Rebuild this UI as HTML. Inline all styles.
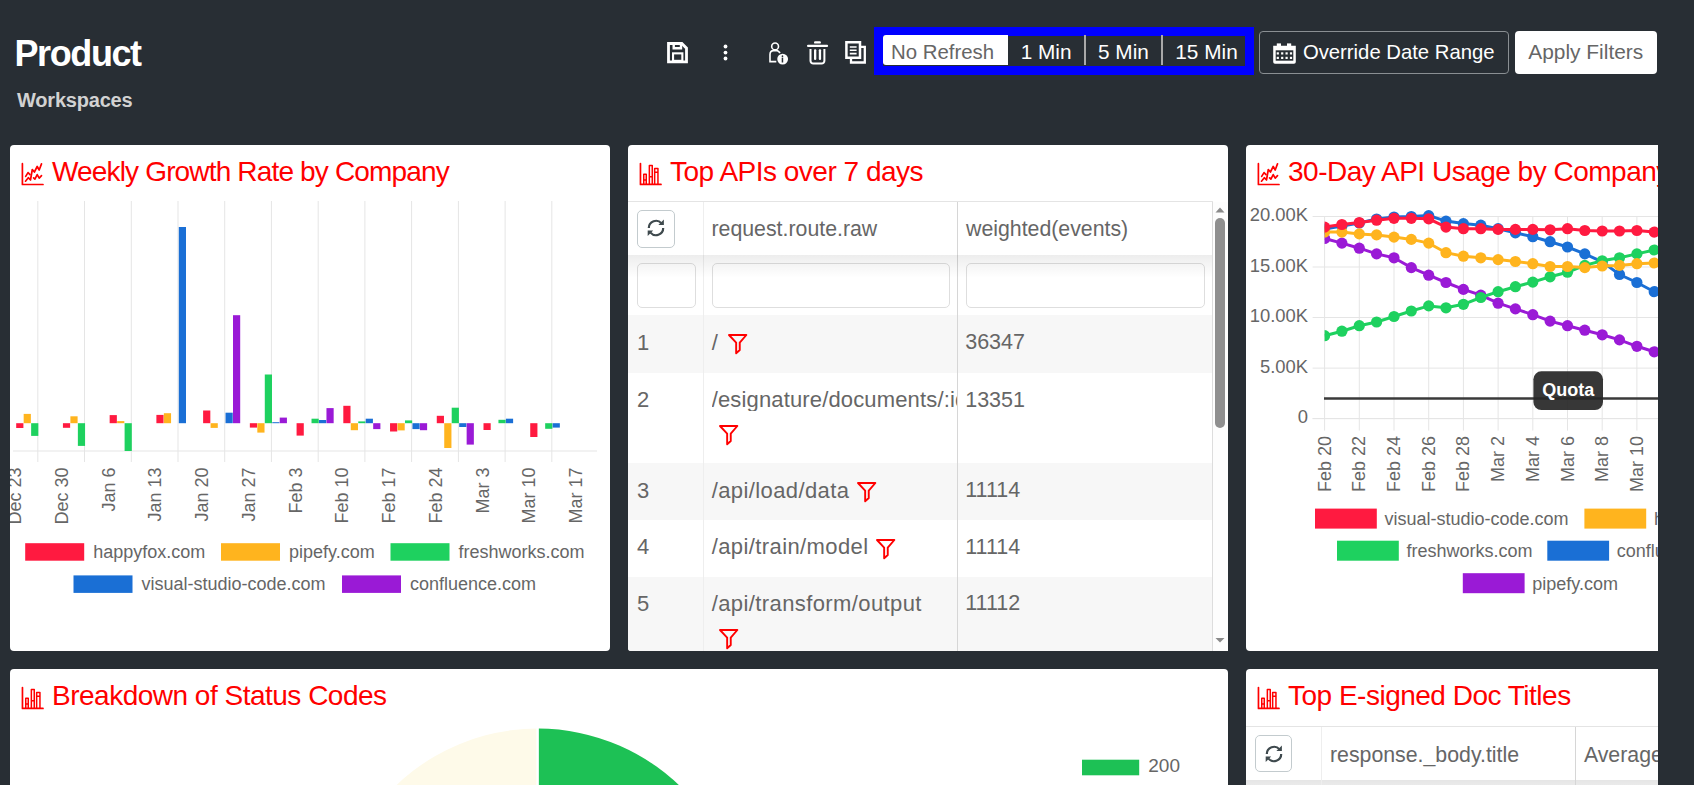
<!DOCTYPE html><html><head><meta charset="utf-8"><style>
html,body{margin:0;padding:0;width:1694px;height:785px;overflow:hidden;background:#282e34;font-family:"Liberation Sans", sans-serif;}
.a{position:absolute}
.card{position:absolute;background:#fff;border-radius:4px;overflow:hidden}
.ttl{position:absolute;color:#ff0000;font-size:28px;line-height:32px;white-space:nowrap;letter-spacing:-0.5px}
svg text{font-family:"Liberation Sans", sans-serif}
</style></head><body><div class="a" style="left:14.5px;top:31.7px;color:#fff;font-size:36px;font-weight:700;letter-spacing:-1.4px;line-height:44px">Product</div><div class="a" style="left:17px;top:88.2px;color:#d2d2d2;font-size:20px;font-weight:700;letter-spacing:-0.2px;line-height:24px">Workspaces</div><svg class="a" style="left:664px;top:39px" width="28" height="28" viewBox="664 39 28 28"><path d="M668.5 43.5H681.8L686.5 48.2V61.8H668.5Z" fill="none" stroke="#fff" stroke-width="2.8" stroke-linejoin="miter"/><path d="M673.7 44V48.3H681V44" fill="none" stroke="#fff" stroke-width="2.4"/><rect x="673.05" y="53.35" width="9.3" height="7.5" fill="none" stroke="#fff" stroke-width="2.1"/></svg><svg class="a" style="left:720px;top:42px" width="12" height="22" viewBox="720 42 12 22"><circle cx="725.5" cy="46.5" r="1.9" fill="#fff"/><circle cx="725.5" cy="52.6" r="1.9" fill="#fff"/><circle cx="725.5" cy="58.5" r="1.9" fill="#fff"/></svg><svg class="a" style="left:765px;top:39px" width="28" height="28" viewBox="765 39 28 28"><circle cx="775.1" cy="46.4" r="3.4" fill="none" stroke="#fff" stroke-width="1.6"/><path d="M776.3 61.6H770V54.5Q770 50.6 773.6 50.6H777.4L780.2 52.9" fill="none" stroke="#fff" stroke-width="1.6"/><circle cx="782.65" cy="59.06" r="5.4" fill="#fff"/><rect x="781.7" y="57.6" width="1.5" height="4.9" fill="#282e34"/><circle cx="782.45" cy="56.2" r="0.85" fill="#282e34"/></svg><svg class="a" style="left:804px;top:38px" width="28" height="30" viewBox="804 38 28 30"><rect x="814" y="41.2" width="6.9" height="2.4" rx="1.2" fill="#fff"/><rect x="807" y="44.7" width="21.1" height="2.3" rx="1.1" fill="#fff"/><path d="M810.5 49V60.8A2.8 2.8 0 0 0 813.3 63.6H821.6A2.8 2.8 0 0 0 824.4 60.8V49" fill="none" stroke="#fff" stroke-width="2"/><rect x="814" y="49.2" width="2.3" height="10.8" rx="1.1" fill="#fff"/><rect x="818.8" y="49.2" width="2.3" height="10.8" rx="1.1" fill="#fff"/></svg><svg class="a" style="left:842px;top:38px" width="28" height="30" viewBox="842 38 28 30"><path d="M846.4 42.2H860V57.8H846.4Z" fill="none" stroke="#fff" stroke-width="2.5"/><path d="M860 46.9H864.8V62.5H851V57.8" fill="none" stroke="#fff" stroke-width="2.3"/><path d="M849.8 47H856.6M849.8 50.3H856.6M849.8 53.6H856.6" stroke="#fff" stroke-width="1.6"/></svg><div class="a" style="left:873.5px;top:26.5px;width:380px;height:48px;box-sizing:border-box;border:9px solid #0000ff;background:transparent"></div><div class="a" style="left:882.5px;top:35.3px;width:125.4px;height:30px;background:#fff;border-radius:3px 0 0 3px"></div><div class="a" style="left:891px;top:42.3px;font-size:20.4px;line-height:20.4px;color:#666;white-space:nowrap;">No Refresh</div><div class="a" style="left:1020.7px;top:42.0px;font-size:20.8px;line-height:20.8px;color:#fff;white-space:nowrap;">1 Min</div><div class="a" style="left:1098px;top:42.0px;font-size:20.8px;line-height:20.8px;color:#fff;white-space:nowrap;">5 Min</div><div class="a" style="left:1175.3px;top:42.0px;font-size:20.8px;line-height:20.8px;color:#fff;white-space:nowrap;">15 Min</div><div class="a" style="left:1084.2px;top:35.3px;width:1.8px;height:30px;background:#a9a9a9"></div><div class="a" style="left:1161.2px;top:35.3px;width:1.8px;height:30px;background:#a9a9a9"></div><div class="a" style="left:1258.5px;top:30.8px;width:250.3px;height:43.6px;box-sizing:border-box;border:1px solid #8a8f93;border-radius:4px"></div><svg class="a" style="left:1270px;top:40px" width="30" height="28" viewBox="1270 40 30 28"><path d="M1273.2 45.7H1295.8V62A1.8 1.8 0 0 1 1294 63.8H1275A1.8 1.8 0 0 1 1273.2 62Z" fill="#fff"/><rect x="1276.8" y="43.4" width="4.2" height="3" fill="#fff"/><rect x="1287" y="43.4" width="4.2" height="3" fill="#fff"/><rect x="1275.7" y="50.3" width="17.6" height="10.4" fill="#282e34"/><rect x="1276.7" y="52.3" width="2.2" height="2.2" fill="#fff"/><rect x="1276.7" y="56.8" width="2.2" height="2.2" fill="#fff"/><rect x="1281.1000000000001" y="52.3" width="2.2" height="2.2" fill="#fff"/><rect x="1281.1000000000001" y="56.8" width="2.2" height="2.2" fill="#fff"/><rect x="1285.5" y="52.3" width="2.2" height="2.2" fill="#fff"/><rect x="1285.5" y="56.8" width="2.2" height="2.2" fill="#fff"/><rect x="1289.9" y="52.3" width="2.2" height="2.2" fill="#fff"/><rect x="1289.9" y="56.8" width="2.2" height="2.2" fill="#fff"/></svg><div class="a" style="left:1302.9px;top:42.4px;font-size:20.3px;line-height:20.3px;color:#fff;white-space:nowrap;">Override Date Range</div><div class="a" style="left:1515px;top:30.8px;width:142.4px;height:43.6px;background:#fff;border-radius:4px"></div><div class="a" style="left:1528.3px;top:41.9px;font-size:20.9px;line-height:20.9px;color:#666;white-space:nowrap;">Apply Filters</div><div class="card" style="left:10px;top:145px;width:600px;height:506px"><svg width="45" height="45" viewBox="0 0 45 45" style="position:absolute;left:0;top:0.4px" fill="none" stroke="red" stroke-width="1.7" stroke-linecap="round" stroke-linejoin="round"><path d="M12.4 18.7V39.5H33"/><path d="M15.7 31.4L18 27.6L20 29.6"/><path d="M15.5 36.2L18.3 32.7L20.5 35L22.3 24.5L24.4 27L27.2 21.5L29.2 25L31.5 18.9"/><path d="M23.6 32.9L24.9 34.2L27.2 29.6L29.2 33.2L31.5 30.6"/></svg><div class="ttl" style="left:42px;top:11.3px;letter-spacing:-0.84px">Weekly Growth Rate by Company</div><svg width="600" height="506" viewBox="10 145 600 506" style="position:absolute;left:0;top:0"><line x1="37.8" y1="201" x2="37.8" y2="462" stroke="#e5e5e5" stroke-width="1"/><line x1="84.5" y1="201" x2="84.5" y2="462" stroke="#e5e5e5" stroke-width="1"/><line x1="131.3" y1="201" x2="131.3" y2="462" stroke="#e5e5e5" stroke-width="1"/><line x1="178.0" y1="201" x2="178.0" y2="462" stroke="#e5e5e5" stroke-width="1"/><line x1="224.7" y1="201" x2="224.7" y2="462" stroke="#e5e5e5" stroke-width="1"/><line x1="271.4" y1="201" x2="271.4" y2="462" stroke="#e5e5e5" stroke-width="1"/><line x1="318.2" y1="201" x2="318.2" y2="462" stroke="#e5e5e5" stroke-width="1"/><line x1="364.9" y1="201" x2="364.9" y2="462" stroke="#e5e5e5" stroke-width="1"/><line x1="411.6" y1="201" x2="411.6" y2="462" stroke="#e5e5e5" stroke-width="1"/><line x1="458.4" y1="201" x2="458.4" y2="462" stroke="#e5e5e5" stroke-width="1"/><line x1="505.1" y1="201" x2="505.1" y2="462" stroke="#e5e5e5" stroke-width="1"/><line x1="551.8" y1="201" x2="551.8" y2="462" stroke="#e5e5e5" stroke-width="1"/><line x1="13" y1="451" x2="597" y2="451" stroke="#e5e5e5" stroke-width="1.2"/><rect x="16.20" y="423.20" width="7.2" height="4.80" fill="#ff1a40"/><rect x="23.67" y="413.90" width="7.2" height="9.30" fill="#ffb41e"/><rect x="31.14" y="423.20" width="7.2" height="12.70" fill="#1ed15f"/><rect x="62.93" y="423.20" width="7.2" height="4.60" fill="#ff1a40"/><rect x="70.40" y="416.30" width="7.2" height="6.90" fill="#ffb41e"/><rect x="77.87" y="423.20" width="7.2" height="22.70" fill="#1ed15f"/><rect x="109.66" y="415.10" width="7.2" height="8.10" fill="#ff1a40"/><rect x="117.13" y="421.10" width="7.2" height="2.10" fill="#ffb41e"/><rect x="124.60" y="423.20" width="7.2" height="27.80" fill="#1ed15f"/><rect x="156.39" y="414.90" width="7.2" height="8.30" fill="#ff1a40"/><rect x="163.86" y="413.20" width="7.2" height="10.00" fill="#ffb41e"/><rect x="178.80" y="227.00" width="7.2" height="196.20" fill="#1a6fd5"/><rect x="203.12" y="410.50" width="7.2" height="12.70" fill="#ff1a40"/><rect x="210.59" y="423.20" width="7.2" height="4.70" fill="#ffb41e"/><rect x="225.53" y="412.70" width="7.2" height="10.50" fill="#1a6fd5"/><rect x="233.00" y="315.20" width="7.2" height="108.00" fill="#9a1ad6"/><rect x="249.85" y="423.20" width="7.2" height="4.40" fill="#ff1a40"/><rect x="257.32" y="423.20" width="7.2" height="9.40" fill="#ffb41e"/><rect x="264.79" y="374.50" width="7.2" height="48.70" fill="#1ed15f"/><rect x="272.26" y="422.20" width="7.2" height="1.00" fill="#1a6fd5"/><rect x="279.73" y="417.60" width="7.2" height="5.60" fill="#9a1ad6"/><rect x="296.58" y="423.20" width="7.2" height="12.40" fill="#ff1a40"/><rect x="311.52" y="418.70" width="7.2" height="4.50" fill="#1ed15f"/><rect x="318.99" y="420.00" width="7.2" height="3.20" fill="#1a6fd5"/><rect x="326.46" y="408.10" width="7.2" height="15.10" fill="#9a1ad6"/><rect x="343.31" y="405.80" width="7.2" height="17.40" fill="#ff1a40"/><rect x="350.78" y="423.20" width="7.2" height="7.00" fill="#ffb41e"/><rect x="358.25" y="421.40" width="7.2" height="1.80" fill="#1ed15f"/><rect x="365.72" y="418.70" width="7.2" height="4.50" fill="#1a6fd5"/><rect x="373.19" y="423.20" width="7.2" height="5.90" fill="#9a1ad6"/><rect x="390.04" y="423.20" width="7.2" height="8.30" fill="#ff1a40"/><rect x="397.51" y="423.20" width="7.2" height="7.20" fill="#ffb41e"/><rect x="404.98" y="420.40" width="7.2" height="2.80" fill="#1ed15f"/><rect x="412.45" y="423.20" width="7.2" height="5.90" fill="#1a6fd5"/><rect x="419.92" y="423.20" width="7.2" height="7.00" fill="#9a1ad6"/><rect x="436.77" y="415.80" width="7.2" height="7.40" fill="#ff1a40"/><rect x="444.24" y="423.20" width="7.2" height="24.80" fill="#ffb41e"/><rect x="451.71" y="407.70" width="7.2" height="15.50" fill="#1ed15f"/><rect x="459.18" y="423.20" width="7.2" height="3.80" fill="#1a6fd5"/><rect x="466.65" y="423.20" width="7.2" height="21.40" fill="#9a1ad6"/><rect x="483.50" y="423.20" width="7.2" height="6.80" fill="#ff1a40"/><rect x="498.44" y="419.80" width="7.2" height="3.40" fill="#1ed15f"/><rect x="505.91" y="418.70" width="7.2" height="4.50" fill="#1a6fd5"/><rect x="530.23" y="423.20" width="7.2" height="13.80" fill="#ff1a40"/><rect x="545.17" y="423.20" width="7.2" height="5.60" fill="#1ed15f"/><rect x="552.64" y="423.20" width="7.2" height="4.40" fill="#1a6fd5"/><text transform="translate(15.2,467.5) rotate(-90)" text-anchor="end" dominant-baseline="central" font-size="18" fill="#666">Dec 23</text><text transform="translate(61.9,467.5) rotate(-90)" text-anchor="end" dominant-baseline="central" font-size="18" fill="#666">Dec 30</text><text transform="translate(108.7,467.5) rotate(-90)" text-anchor="end" dominant-baseline="central" font-size="18" fill="#666">Jan 6</text><text transform="translate(155.4,467.5) rotate(-90)" text-anchor="end" dominant-baseline="central" font-size="18" fill="#666">Jan 13</text><text transform="translate(202.1,467.5) rotate(-90)" text-anchor="end" dominant-baseline="central" font-size="18" fill="#666">Jan 20</text><text transform="translate(248.8,467.5) rotate(-90)" text-anchor="end" dominant-baseline="central" font-size="18" fill="#666">Jan 27</text><text transform="translate(295.6,467.5) rotate(-90)" text-anchor="end" dominant-baseline="central" font-size="18" fill="#666">Feb 3</text><text transform="translate(342.3,467.5) rotate(-90)" text-anchor="end" dominant-baseline="central" font-size="18" fill="#666">Feb 10</text><text transform="translate(389.0,467.5) rotate(-90)" text-anchor="end" dominant-baseline="central" font-size="18" fill="#666">Feb 17</text><text transform="translate(435.8,467.5) rotate(-90)" text-anchor="end" dominant-baseline="central" font-size="18" fill="#666">Feb 24</text><text transform="translate(482.5,467.5) rotate(-90)" text-anchor="end" dominant-baseline="central" font-size="18" fill="#666">Mar 3</text><text transform="translate(529.2,467.5) rotate(-90)" text-anchor="end" dominant-baseline="central" font-size="18" fill="#666">Mar 10</text><text transform="translate(576.0,467.5) rotate(-90)" text-anchor="end" dominant-baseline="central" font-size="18" fill="#666">Mar 17</text><rect x="25.2" y="543.2" width="59" height="17.5" fill="#ff1a40"/><text x="93.2" y="558.2" font-size="18" fill="#666">happyfox.com</text><rect x="221" y="543.2" width="59" height="17.5" fill="#ffb41e"/><text x="289" y="558.2" font-size="18" fill="#666">pipefy.com</text><rect x="390.5" y="543.2" width="59" height="17.5" fill="#1ed15f"/><text x="458.5" y="558.2" font-size="18" fill="#666">freshworks.com</text><rect x="73.5" y="575.4" width="59" height="17.5" fill="#1a6fd5"/><text x="141.5" y="590.4" font-size="18" fill="#666">visual-studio-code.com</text><rect x="342" y="575.4" width="59" height="17.5" fill="#9a1ad6"/><text x="410" y="590.4" font-size="18" fill="#666">confluence.com</text></svg></div><div class="card" style="left:628px;top:145px;width:600px;height:506px;border-radius:4px 4px 0 3px"><svg width="45" height="45" viewBox="0 0 45 45" style="position:absolute;left:0;top:0.4px" fill="none" stroke="red" stroke-width="1.5" stroke-linejoin="round"><path d="M12.46 18.6V39.4H33" stroke-width="1.7" stroke-linecap="round"/><path d="M15.75 39.4V29.35H18.25V39.4M15.75 35.1H18.25"/><path d="M21.35 39.4V20.45H24.25V39.4M21.35 31.8H24.25"/><path d="M26.65 39.4V23.45H29.95V39.4M26.65 27.3H29.95"/></svg><div class="ttl" style="left:42px;top:11.3px;">Top APIs over 7 days</div><div class="a" style="left:0.0px;top:170.1px;width:584.5px;height:57.5px;background:#f7f7f7"></div><div class="a" style="left:0.0px;top:318.2px;width:584.5px;height:57.3px;background:#f7f7f7"></div><div class="a" style="left:0.0px;top:432.1px;width:584.5px;height:82.9px;background:#f7f7f7"></div><div class="a" style="left:0.0px;top:56.0px;width:584.5px;height:1.0px;background:#e4e4e4"></div><div class="a" style="left:75.0px;top:56.5px;width:1.0px;height:458.5px;background:#eeeeee"></div><div class="a" style="left:329.0px;top:56.5px;width:1.2px;height:458.5px;background:#d6d6d6"></div><div class="a" style="left:9.2px;top:65.2px;width:37.6px;height:37.6px;box-sizing:border-box;border:1px solid #c3cbce;border-radius:5px;background:#fff"></div><svg width="24" height="24" viewBox="0 0 24 24" style="position:absolute;left:15.799999999999955px;top:71.4px"><g fill="none" stroke="#3f4a4e" stroke-width="2.2"><path d="M4.8 12A7.2 7.2 0 0 1 17.5 7.4"/><path d="M19.2 12A7.2 7.2 0 0 1 6.5 16.6"/></g><g fill="#3f4a4e"><path d="M19.9 9V3.6L14.4 9Z"/><path d="M3.7 14.6V20L9.2 14.6Z"/></g></svg><div class="a" style="left:9.2px;top:118.3px;width:58.5px;height:44.9px;box-sizing:border-box;border:1px solid #dedede;border-radius:5px;background:#fff"></div><div class="a" style="left:84.2px;top:118.3px;width:237.6px;height:44.9px;box-sizing:border-box;border:1px solid #dedede;border-radius:5px;background:#fff"></div><div class="a" style="left:338.0px;top:118.3px;width:238.5px;height:44.9px;box-sizing:border-box;border:1px solid #dedede;border-radius:5px;background:#fff"></div><div class="a" style="left:0.0px;top:109.6px;width:584.5px;height:23.4px;background:linear-gradient(rgba(0,0,0,0.07),rgba(0,0,0,0))"></div><div class="a" style="left:584.0px;top:56.5px;width:1.0px;height:458.5px;background:#dddddd"></div><div class="a" style="left:83.5px;top:74.0px;font-size:21.3px;line-height:21.3px;color:#666;white-space:nowrap;">request.route.raw</div><div class="a" style="left:338px;top:74.0px;font-size:21.3px;line-height:21.3px;color:#666;white-space:nowrap;">weighted(events)</div><div class="a" style="left:9px;top:186.9px;font-size:22px;line-height:22px;color:#666;white-space:nowrap;">1</div><div class="a" style="left:83.70000000000005px;top:186.9px;font-size:22px;line-height:22px;color:#666;white-space:nowrap;letter-spacing:0.4px">/</div><div class="a" style="left:337.20000000000005px;top:187.3px;font-size:21.5px;line-height:21.5px;color:#666;white-space:nowrap;">36347</div><svg width="22" height="23" viewBox="-2 -2 22 23" style="position:absolute;left:99.20000000000005px;top:187.5px"><path d="M0 0H17.35L10.75 7.6V15L7.15 18.3V7.6Z" fill="none" stroke="#ff0000" stroke-width="1.9" stroke-linejoin="round"/></svg><div class="a" style="left:9px;top:244.2px;font-size:22px;line-height:22px;color:#666;white-space:nowrap;">2</div><div class="a" style="left:83.70000000000005px;top:244.2px;font-size:22px;line-height:22px;color:#666;white-space:nowrap;letter-spacing:0.4px"><span style="display:inline-block;width:245px;overflow:hidden;vertical-align:top;letter-spacing:0.15px">/esignature/documents/:id</span></div><div class="a" style="left:337.20000000000005px;top:244.6px;font-size:21.5px;line-height:21.5px;color:#666;white-space:nowrap;">13351</div><svg width="22" height="23" viewBox="-2 -2 22 23" style="position:absolute;left:90.29999999999995px;top:278.5px"><path d="M0 0H17.35L10.75 7.6V15L7.15 18.3V7.6Z" fill="none" stroke="#ff0000" stroke-width="1.9" stroke-linejoin="round"/></svg><div class="a" style="left:9px;top:334.8px;font-size:22px;line-height:22px;color:#666;white-space:nowrap;">3</div><div class="a" style="left:83.70000000000005px;top:334.8px;font-size:22px;line-height:22px;color:#666;white-space:nowrap;letter-spacing:0.4px">/api/load/data</div><div class="a" style="left:337.20000000000005px;top:335.2px;font-size:21.5px;line-height:21.5px;color:#666;white-space:nowrap;">11114</div><svg width="22" height="23" viewBox="-2 -2 22 23" style="position:absolute;left:228.25px;top:336px"><path d="M0 0H17.35L10.75 7.6V15L7.15 18.3V7.6Z" fill="none" stroke="#ff0000" stroke-width="1.9" stroke-linejoin="round"/></svg><div class="a" style="left:9px;top:391.4px;font-size:22px;line-height:22px;color:#666;white-space:nowrap;">4</div><div class="a" style="left:83.70000000000005px;top:391.4px;font-size:22px;line-height:22px;color:#666;white-space:nowrap;letter-spacing:0.4px">/api/train/model</div><div class="a" style="left:337.20000000000005px;top:391.8px;font-size:21.5px;line-height:21.5px;color:#666;white-space:nowrap;">11114</div><svg width="22" height="23" viewBox="-2 -2 22 23" style="position:absolute;left:247.20000000000005px;top:393px"><path d="M0 0H17.35L10.75 7.6V15L7.15 18.3V7.6Z" fill="none" stroke="#ff0000" stroke-width="1.9" stroke-linejoin="round"/></svg><div class="a" style="left:9px;top:447.9px;font-size:22px;line-height:22px;color:#666;white-space:nowrap;">5</div><div class="a" style="left:83.70000000000005px;top:447.9px;font-size:22px;line-height:22px;color:#666;white-space:nowrap;letter-spacing:0.4px">/api/transform/output</div><div class="a" style="left:337.20000000000005px;top:448.3px;font-size:21.5px;line-height:21.5px;color:#666;white-space:nowrap;">11112</div><svg width="22" height="23" viewBox="-2 -2 22 23" style="position:absolute;left:90.29999999999995px;top:483px"><path d="M0 0H17.35L10.75 7.6V15L7.15 18.3V7.6Z" fill="none" stroke="#ff0000" stroke-width="1.9" stroke-linejoin="round"/></svg><div class="a" style="left:585.0px;top:56.5px;width:15.0px;height:449.5px;background:#fdfdfd"></div><div class="a" style="left:587.3px;top:73.0px;width:9.5px;height:210.0px;background:#8f8f8f;border-radius:5px"></div><svg class="a" style="left:586px;top:59px" width="12" height="10"><path d="M1.5 8.5H10.5L6 3.5Z" fill="#8a8a8a"/></svg><svg class="a" style="left:586px;top:491px" width="12" height="10"><path d="M1.5 2H10.5L6 6.5Z" fill="#8a8a8a"/></svg></div><div class="card" style="left:1246px;top:145px;width:412px;height:506px;border-radius:4px 0 0 4px"><svg width="45" height="45" viewBox="0 0 45 45" style="position:absolute;left:0;top:0.4px" fill="none" stroke="red" stroke-width="1.7" stroke-linecap="round" stroke-linejoin="round"><path d="M12.4 18.7V39.5H33"/><path d="M15.7 31.4L18 27.6L20 29.6"/><path d="M15.5 36.2L18.3 32.7L20.5 35L22.3 24.5L24.4 27L27.2 21.5L29.2 25L31.5 18.9"/><path d="M23.6 32.9L24.9 34.2L27.2 29.6L29.2 33.2L31.5 30.6"/></svg><div class="ttl" style="left:42px;top:11.3px;">30-Day API Usage by Company</div><svg width="412" height="506" viewBox="1246 145 412 506" style="position:absolute;left:0;top:0"><line x1="1324.6" y1="216" x2="1324.6" y2="430.6" stroke="#e5e5e5"/><line x1="1359.3" y1="216" x2="1359.3" y2="430.6" stroke="#e5e5e5"/><line x1="1394.0" y1="216" x2="1394.0" y2="430.6" stroke="#e5e5e5"/><line x1="1428.7" y1="216" x2="1428.7" y2="430.6" stroke="#e5e5e5"/><line x1="1463.4" y1="216" x2="1463.4" y2="430.6" stroke="#e5e5e5"/><line x1="1498.1" y1="216" x2="1498.1" y2="430.6" stroke="#e5e5e5"/><line x1="1532.8" y1="216" x2="1532.8" y2="430.6" stroke="#e5e5e5"/><line x1="1567.5" y1="216" x2="1567.5" y2="430.6" stroke="#e5e5e5"/><line x1="1602.2" y1="216" x2="1602.2" y2="430.6" stroke="#e5e5e5"/><line x1="1636.9" y1="216" x2="1636.9" y2="430.6" stroke="#e5e5e5"/><line x1="1312.6" y1="216.5" x2="1660" y2="216.5" stroke="#e5e5e5"/><text x="1308" y="221.1" text-anchor="end" font-size="18.4" fill="#666">20.00K</text><line x1="1312.6" y1="267.0" x2="1660" y2="267.0" stroke="#e5e5e5"/><text x="1308" y="271.6" text-anchor="end" font-size="18.4" fill="#666">15.00K</text><line x1="1312.6" y1="317.5" x2="1660" y2="317.5" stroke="#e5e5e5"/><text x="1308" y="322.1" text-anchor="end" font-size="18.4" fill="#666">10.00K</text><line x1="1312.6" y1="368.1" x2="1660" y2="368.1" stroke="#e5e5e5"/><text x="1308" y="372.7" text-anchor="end" font-size="18.4" fill="#666">5.00K</text><line x1="1312.6" y1="418.6" x2="1660" y2="418.6" stroke="#e5e5e5"/><text x="1308" y="423.2" text-anchor="end" font-size="18.4" fill="#666">0</text><line x1="1324" y1="398.6" x2="1660" y2="398.6" stroke="#3a3a3a" stroke-width="2.5"/><clipPath id="c3"><rect x="1324.6" y="150" width="400" height="300"/></clipPath><g clip-path="url(#c3)"><polyline points="1324.6,238.5 1341.9,243.1 1359.3,248.2 1376.6,253.9 1394.0,257.8 1411.3,267.6 1428.7,275.2 1446.0,282.5 1463.4,289.4 1480.8,295.2 1498.1,303.2 1515.4,308.9 1532.8,314.7 1550.1,321.1 1567.5,325.7 1584.8,330.2 1602.2,334.8 1619.5,339.9 1636.9,346.3 1654.2,351.8" fill="none" stroke="#9a1ad6" stroke-width="3"/><circle cx="1324.6" cy="238.5" r="5.6" fill="#9a1ad6"/><circle cx="1341.9" cy="243.1" r="5.6" fill="#9a1ad6"/><circle cx="1359.3" cy="248.2" r="5.6" fill="#9a1ad6"/><circle cx="1376.6" cy="253.9" r="5.6" fill="#9a1ad6"/><circle cx="1394.0" cy="257.8" r="5.6" fill="#9a1ad6"/><circle cx="1411.3" cy="267.6" r="5.6" fill="#9a1ad6"/><circle cx="1428.7" cy="275.2" r="5.6" fill="#9a1ad6"/><circle cx="1446.0" cy="282.5" r="5.6" fill="#9a1ad6"/><circle cx="1463.4" cy="289.4" r="5.6" fill="#9a1ad6"/><circle cx="1480.8" cy="295.2" r="5.6" fill="#9a1ad6"/><circle cx="1498.1" cy="303.2" r="5.6" fill="#9a1ad6"/><circle cx="1515.4" cy="308.9" r="5.6" fill="#9a1ad6"/><circle cx="1532.8" cy="314.7" r="5.6" fill="#9a1ad6"/><circle cx="1550.1" cy="321.1" r="5.6" fill="#9a1ad6"/><circle cx="1567.5" cy="325.7" r="5.6" fill="#9a1ad6"/><circle cx="1584.8" cy="330.2" r="5.6" fill="#9a1ad6"/><circle cx="1602.2" cy="334.8" r="5.6" fill="#9a1ad6"/><circle cx="1619.5" cy="339.9" r="5.6" fill="#9a1ad6"/><circle cx="1636.9" cy="346.3" r="5.6" fill="#9a1ad6"/><circle cx="1654.2" cy="351.8" r="5.6" fill="#9a1ad6"/><polyline points="1324.6,229 1341.9,226 1359.3,223 1376.6,219 1394.0,217 1411.3,216.5 1428.7,215.6 1446.0,221.1 1463.4,223.6 1480.8,225.2 1498.1,228.7 1515.4,232.8 1532.8,236.7 1550.1,241.7 1567.5,247 1584.8,253.9 1602.2,261.9 1619.5,274.5 1636.9,282.5 1654.2,291.7" fill="none" stroke="#1a6fd5" stroke-width="3"/><circle cx="1324.6" cy="229" r="5.6" fill="#1a6fd5"/><circle cx="1341.9" cy="226" r="5.6" fill="#1a6fd5"/><circle cx="1359.3" cy="223" r="5.6" fill="#1a6fd5"/><circle cx="1376.6" cy="219" r="5.6" fill="#1a6fd5"/><circle cx="1394.0" cy="217" r="5.6" fill="#1a6fd5"/><circle cx="1411.3" cy="216.5" r="5.6" fill="#1a6fd5"/><circle cx="1428.7" cy="215.6" r="5.6" fill="#1a6fd5"/><circle cx="1446.0" cy="221.1" r="5.6" fill="#1a6fd5"/><circle cx="1463.4" cy="223.6" r="5.6" fill="#1a6fd5"/><circle cx="1480.8" cy="225.2" r="5.6" fill="#1a6fd5"/><circle cx="1498.1" cy="228.7" r="5.6" fill="#1a6fd5"/><circle cx="1515.4" cy="232.8" r="5.6" fill="#1a6fd5"/><circle cx="1532.8" cy="236.7" r="5.6" fill="#1a6fd5"/><circle cx="1550.1" cy="241.7" r="5.6" fill="#1a6fd5"/><circle cx="1567.5" cy="247" r="5.6" fill="#1a6fd5"/><circle cx="1584.8" cy="253.9" r="5.6" fill="#1a6fd5"/><circle cx="1602.2" cy="261.9" r="5.6" fill="#1a6fd5"/><circle cx="1619.5" cy="274.5" r="5.6" fill="#1a6fd5"/><circle cx="1636.9" cy="282.5" r="5.6" fill="#1a6fd5"/><circle cx="1654.2" cy="291.7" r="5.6" fill="#1a6fd5"/><polyline points="1324.6,335.7 1341.9,331.2 1359.3,325.7 1376.6,322 1394.0,316.5 1411.3,311 1428.7,305.9 1446.0,307.8 1463.4,304.3 1480.8,297.5 1498.1,291.7 1515.4,286.7 1532.8,282.1 1550.1,276.8 1567.5,272.2 1584.8,265.4 1602.2,260.8 1619.5,257.8 1636.9,253.9 1654.2,250" fill="none" stroke="#1ed15f" stroke-width="3"/><circle cx="1324.6" cy="335.7" r="5.6" fill="#1ed15f"/><circle cx="1341.9" cy="331.2" r="5.6" fill="#1ed15f"/><circle cx="1359.3" cy="325.7" r="5.6" fill="#1ed15f"/><circle cx="1376.6" cy="322" r="5.6" fill="#1ed15f"/><circle cx="1394.0" cy="316.5" r="5.6" fill="#1ed15f"/><circle cx="1411.3" cy="311" r="5.6" fill="#1ed15f"/><circle cx="1428.7" cy="305.9" r="5.6" fill="#1ed15f"/><circle cx="1446.0" cy="307.8" r="5.6" fill="#1ed15f"/><circle cx="1463.4" cy="304.3" r="5.6" fill="#1ed15f"/><circle cx="1480.8" cy="297.5" r="5.6" fill="#1ed15f"/><circle cx="1498.1" cy="291.7" r="5.6" fill="#1ed15f"/><circle cx="1515.4" cy="286.7" r="5.6" fill="#1ed15f"/><circle cx="1532.8" cy="282.1" r="5.6" fill="#1ed15f"/><circle cx="1550.1" cy="276.8" r="5.6" fill="#1ed15f"/><circle cx="1567.5" cy="272.2" r="5.6" fill="#1ed15f"/><circle cx="1584.8" cy="265.4" r="5.6" fill="#1ed15f"/><circle cx="1602.2" cy="260.8" r="5.6" fill="#1ed15f"/><circle cx="1619.5" cy="257.8" r="5.6" fill="#1ed15f"/><circle cx="1636.9" cy="253.9" r="5.6" fill="#1ed15f"/><circle cx="1654.2" cy="250" r="5.6" fill="#1ed15f"/><polyline points="1324.6,232.1 1341.9,232.1 1359.3,233.9 1376.6,234.9 1394.0,237.1 1411.3,239.4 1428.7,243.1 1446.0,252.7 1463.4,256.2 1480.8,257.8 1498.1,259.6 1515.4,261.5 1532.8,263.7 1550.1,266.5 1567.5,266.5 1584.8,267.6 1602.2,266 1619.5,265.4 1636.9,263.7 1654.2,263" fill="none" stroke="#ffb41e" stroke-width="3"/><circle cx="1324.6" cy="232.1" r="5.6" fill="#ffb41e"/><circle cx="1341.9" cy="232.1" r="5.6" fill="#ffb41e"/><circle cx="1359.3" cy="233.9" r="5.6" fill="#ffb41e"/><circle cx="1376.6" cy="234.9" r="5.6" fill="#ffb41e"/><circle cx="1394.0" cy="237.1" r="5.6" fill="#ffb41e"/><circle cx="1411.3" cy="239.4" r="5.6" fill="#ffb41e"/><circle cx="1428.7" cy="243.1" r="5.6" fill="#ffb41e"/><circle cx="1446.0" cy="252.7" r="5.6" fill="#ffb41e"/><circle cx="1463.4" cy="256.2" r="5.6" fill="#ffb41e"/><circle cx="1480.8" cy="257.8" r="5.6" fill="#ffb41e"/><circle cx="1498.1" cy="259.6" r="5.6" fill="#ffb41e"/><circle cx="1515.4" cy="261.5" r="5.6" fill="#ffb41e"/><circle cx="1532.8" cy="263.7" r="5.6" fill="#ffb41e"/><circle cx="1550.1" cy="266.5" r="5.6" fill="#ffb41e"/><circle cx="1567.5" cy="266.5" r="5.6" fill="#ffb41e"/><circle cx="1584.8" cy="267.6" r="5.6" fill="#ffb41e"/><circle cx="1602.2" cy="266" r="5.6" fill="#ffb41e"/><circle cx="1619.5" cy="265.4" r="5.6" fill="#ffb41e"/><circle cx="1636.9" cy="263.7" r="5.6" fill="#ffb41e"/><circle cx="1654.2" cy="263" r="5.6" fill="#ffb41e"/><polyline points="1324.6,227.1 1341.9,224.5 1359.3,222.5 1376.6,220.2 1394.0,218.3 1411.3,218.3 1428.7,218.8 1446.0,227.1 1463.4,228.7 1480.8,228.7 1498.1,229.4 1515.4,229.4 1532.8,229.4 1550.1,229.8 1567.5,228.7 1584.8,230.5 1602.2,231 1619.5,231 1636.9,230.5 1654.2,232.1" fill="none" stroke="#ff1a40" stroke-width="3"/><circle cx="1324.6" cy="227.1" r="5.6" fill="#ff1a40"/><circle cx="1341.9" cy="224.5" r="5.6" fill="#ff1a40"/><circle cx="1359.3" cy="222.5" r="5.6" fill="#ff1a40"/><circle cx="1376.6" cy="220.2" r="5.6" fill="#ff1a40"/><circle cx="1394.0" cy="218.3" r="5.6" fill="#ff1a40"/><circle cx="1411.3" cy="218.3" r="5.6" fill="#ff1a40"/><circle cx="1428.7" cy="218.8" r="5.6" fill="#ff1a40"/><circle cx="1446.0" cy="227.1" r="5.6" fill="#ff1a40"/><circle cx="1463.4" cy="228.7" r="5.6" fill="#ff1a40"/><circle cx="1480.8" cy="228.7" r="5.6" fill="#ff1a40"/><circle cx="1498.1" cy="229.4" r="5.6" fill="#ff1a40"/><circle cx="1515.4" cy="229.4" r="5.6" fill="#ff1a40"/><circle cx="1532.8" cy="229.4" r="5.6" fill="#ff1a40"/><circle cx="1550.1" cy="229.8" r="5.6" fill="#ff1a40"/><circle cx="1567.5" cy="228.7" r="5.6" fill="#ff1a40"/><circle cx="1584.8" cy="230.5" r="5.6" fill="#ff1a40"/><circle cx="1602.2" cy="231" r="5.6" fill="#ff1a40"/><circle cx="1619.5" cy="231" r="5.6" fill="#ff1a40"/><circle cx="1636.9" cy="230.5" r="5.6" fill="#ff1a40"/><circle cx="1654.2" cy="232.1" r="5.6" fill="#ff1a40"/></g><rect x="1533.4" y="371.3" width="69.6" height="38.7" rx="8" fill="#262626" fill-opacity="0.92"/><text x="1568.2" y="395.8" text-anchor="middle" font-size="18" font-weight="700" fill="#fff">Quota</text><line x1="1312.6" y1="418.6" x2="1660" y2="418.6" stroke="#e5e5e5"/><text transform="translate(1324.6,436) rotate(-90)" text-anchor="end" dominant-baseline="central" font-size="18" fill="#666">Feb 20</text><text transform="translate(1359.3,436) rotate(-90)" text-anchor="end" dominant-baseline="central" font-size="18" fill="#666">Feb 22</text><text transform="translate(1394.0,436) rotate(-90)" text-anchor="end" dominant-baseline="central" font-size="18" fill="#666">Feb 24</text><text transform="translate(1428.7,436) rotate(-90)" text-anchor="end" dominant-baseline="central" font-size="18" fill="#666">Feb 26</text><text transform="translate(1463.4,436) rotate(-90)" text-anchor="end" dominant-baseline="central" font-size="18" fill="#666">Feb 28</text><text transform="translate(1498.1,436) rotate(-90)" text-anchor="end" dominant-baseline="central" font-size="18" fill="#666">Mar 2</text><text transform="translate(1532.8,436) rotate(-90)" text-anchor="end" dominant-baseline="central" font-size="18" fill="#666">Mar 4</text><text transform="translate(1567.5,436) rotate(-90)" text-anchor="end" dominant-baseline="central" font-size="18" fill="#666">Mar 6</text><text transform="translate(1602.2,436) rotate(-90)" text-anchor="end" dominant-baseline="central" font-size="18" fill="#666">Mar 8</text><text transform="translate(1636.9,436) rotate(-90)" text-anchor="end" dominant-baseline="central" font-size="18" fill="#666">Mar 10</text><text transform="translate(1671.6,436) rotate(-90)" text-anchor="end" dominant-baseline="central" font-size="18" fill="#666">Mar 12</text><rect x="1315" y="508.6" width="61.8" height="20" fill="#ff1a40"/><text x="1384.5" y="525.1" font-size="18" fill="#666">visual-studio-code.com</text><rect x="1584.4" y="508.6" width="61.8" height="20" fill="#ffb41e"/><text x="1653.9" y="525.1" font-size="18" fill="#666">happyfox.com</text><rect x="1337" y="540.7" width="61.8" height="20" fill="#1ed15f"/><text x="1406.5" y="557.2" font-size="18" fill="#666">freshworks.com</text><rect x="1547.3" y="540.7" width="61.8" height="20" fill="#1a6fd5"/><text x="1616.8" y="557.2" font-size="18" fill="#666">confluence.com</text><rect x="1462.8" y="573.2" width="61.8" height="20" fill="#9a1ad6"/><text x="1532.3" y="589.7" font-size="18" fill="#666">pipefy.com</text></svg></div><div class="card" style="left:10px;top:669px;width:1218px;height:130px"><svg width="45" height="45" viewBox="0 0 45 45" style="position:absolute;left:0;top:0.4px" fill="none" stroke="red" stroke-width="1.5" stroke-linejoin="round"><path d="M12.46 18.6V39.4H33" stroke-width="1.7" stroke-linecap="round"/><path d="M15.75 39.4V29.35H18.25V39.4M15.75 35.1H18.25"/><path d="M21.35 39.4V20.45H24.25V39.4M21.35 31.8H24.25"/><path d="M26.65 39.4V23.45H29.95V39.4M26.65 27.3H29.95"/></svg><div class="ttl" style="left:42px;top:11.3px;">Breakdown of Status Codes</div><svg width="1218" height="130" viewBox="10 669 1218 130" style="position:absolute;left:0;top:0"><path d="M537.6 728.6A204.4 204.4 0 1 1 537.5 728.6Z" fill="#fefae9"/><path d="M537.6 933V728.6A204.4 204.4 0 0 1 741.5 950Z" fill="#1dc155"/><line x1="537.6" y1="728" x2="537.6" y2="933" stroke="#fff" stroke-width="2.5"/><rect x="1082" y="759.7" width="57.2" height="15.6" fill="#1dc155"/><text x="1148.3" y="771.6" font-size="19" fill="#666">200</text></svg></div><div class="card" style="left:1246px;top:669px;width:412px;height:130px;border-radius:4px 0 0 0"><svg width="45" height="45" viewBox="0 0 45 45" style="position:absolute;left:0;top:0.4px" fill="none" stroke="red" stroke-width="1.5" stroke-linejoin="round"><path d="M12.46 18.6V39.4H33" stroke-width="1.7" stroke-linecap="round"/><path d="M15.75 39.4V29.35H18.25V39.4M15.75 35.1H18.25"/><path d="M21.35 39.4V20.45H24.25V39.4M21.35 31.8H24.25"/><path d="M26.65 39.4V23.45H29.95V39.4M26.65 27.3H29.95"/></svg><div class="ttl" style="left:42px;top:11.3px;">Top E-signed Doc Titles</div><div class="a" style="left:0.0px;top:110.7px;width:414.0px;height:20.3px;background:#f7f7f7"></div><div class="a" style="left:0.0px;top:110.7px;width:414.0px;height:20.3px;background:linear-gradient(rgba(0,0,0,0.07),rgba(0,0,0,0))"></div><div class="a" style="left:0.0px;top:57.0px;width:414.0px;height:1.0px;background:#e4e4e4"></div><div class="a" style="left:75.0px;top:57.5px;width:1.0px;height:73.5px;background:#eeeeee"></div><div class="a" style="left:328.6px;top:57.5px;width:1.2px;height:73.5px;background:#d6d6d6"></div><div class="a" style="left:9.2px;top:66.3px;width:37.2px;height:37.0px;box-sizing:border-box;border:1px solid #c3cbce;border-radius:5px;background:#fff"></div><svg width="24" height="24" viewBox="0 0 24 24" style="position:absolute;left:16px;top:72.79999999999995px"><g fill="none" stroke="#3f4a4e" stroke-width="2.2"><path d="M4.8 12A7.2 7.2 0 0 1 17.5 7.4"/><path d="M19.2 12A7.2 7.2 0 0 1 6.5 16.6"/></g><g fill="#3f4a4e"><path d="M19.9 9V3.6L14.4 9Z"/><path d="M3.7 14.6V20L9.2 14.6Z"/></g></svg><div class="a" style="left:84px;top:75.5px;font-size:21.3px;line-height:21.3px;color:#666;white-space:nowrap;">response._body.title</div><div class="a" style="left:337.9000000000001px;top:75.5px;font-size:21.3px;line-height:21.3px;color:#666;white-space:nowrap;">Average</div></div></body></html>
